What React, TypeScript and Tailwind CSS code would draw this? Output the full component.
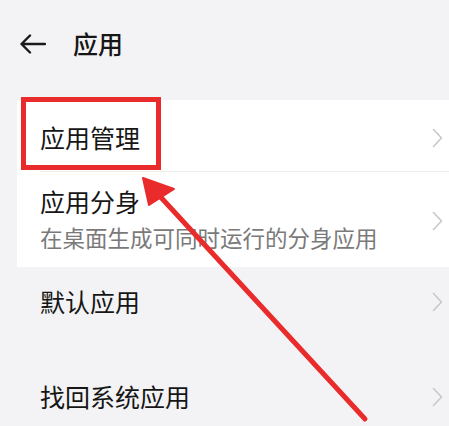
import React from "react";

const rowText = "text-[25px] leading-none text-[#161616]";

function Chevron() {
  return (
    <svg width="11" height="20" viewBox="0 0 11 20" fill="none" className="shrink-0">
      <polyline points="1.5,1.5 9.5,10 1.5,18.5" stroke="#c8c8c8" strokeWidth="1.6" strokeLinecap="round" strokeLinejoin="round" />
    </svg>
  );
}

function Row({ title, sub, className }: { title: string; sub?: string; className: string }) {
  return (
    <div className={`flex items-center justify-between pl-[23px] pr-[6px] ${className}`}>
      <div className="flex flex-col">
        <div className={rowText}>{title}</div>
        {sub && <div className="mt-[13px] text-[22.5px] leading-none text-[#7a7a7a]">{sub}</div>}
      </div>
      <Chevron />
    </div>
  );
}

export default function App() {
  return (
    <div
      className="relative w-[449px] h-[426px] overflow-hidden bg-[#f3f3f5]"
      style={{ fontFamily: '"Noto Sans", "Noto Sans CJK SC", sans-serif' }}
    >
      <div className="flex h-[88px] items-center pl-[20px]">
        <svg width="26" height="20" viewBox="0 0 26 20" fill="none">
          <path d="M25 10H2M10 1.5L1.5 10L10 18.5" stroke="#1a1a1a" strokeWidth="2.4" strokeLinecap="round" strokeLinejoin="round" />
        </svg>
        <div className="ml-[27px] text-[25px] leading-none font-medium text-[#161616]">应用</div>
      </div>

      <div className="ml-[17px] mt-[12px] bg-white">
        <Row title="应用管理" className="h-[71px] pt-[5px]" />
        <div className="ml-[23px] h-px bg-[#ececec]" />
        <Row title="应用分身" sub="在桌面生成可同时运行的分身应用" className="h-[95px] pt-[2px]" />
      </div>

      <div className="ml-[17px]">
        <Row title="默认应用" className="h-[70px]" />
        <Row title="找回系统应用" className="mt-[25px] h-[70px]" />
      </div>

      <div className="absolute left-[21px] top-[97px] h-[73px] w-[140px] border-[5px] border-[#ea2b2b]" />

      <svg className="absolute inset-0" width="449" height="426" viewBox="0 0 449 426">
        <line x1="156" y1="192" x2="365" y2="419" stroke="#ea2b2b" strokeWidth="5" strokeLinecap="round" />
        <polygon points="143,178 174,189 149,205" fill="#ea2b2b" stroke="#ea2b2b" strokeWidth="2" strokeLinejoin="round" />
      </svg>
    </div>
  );
}
